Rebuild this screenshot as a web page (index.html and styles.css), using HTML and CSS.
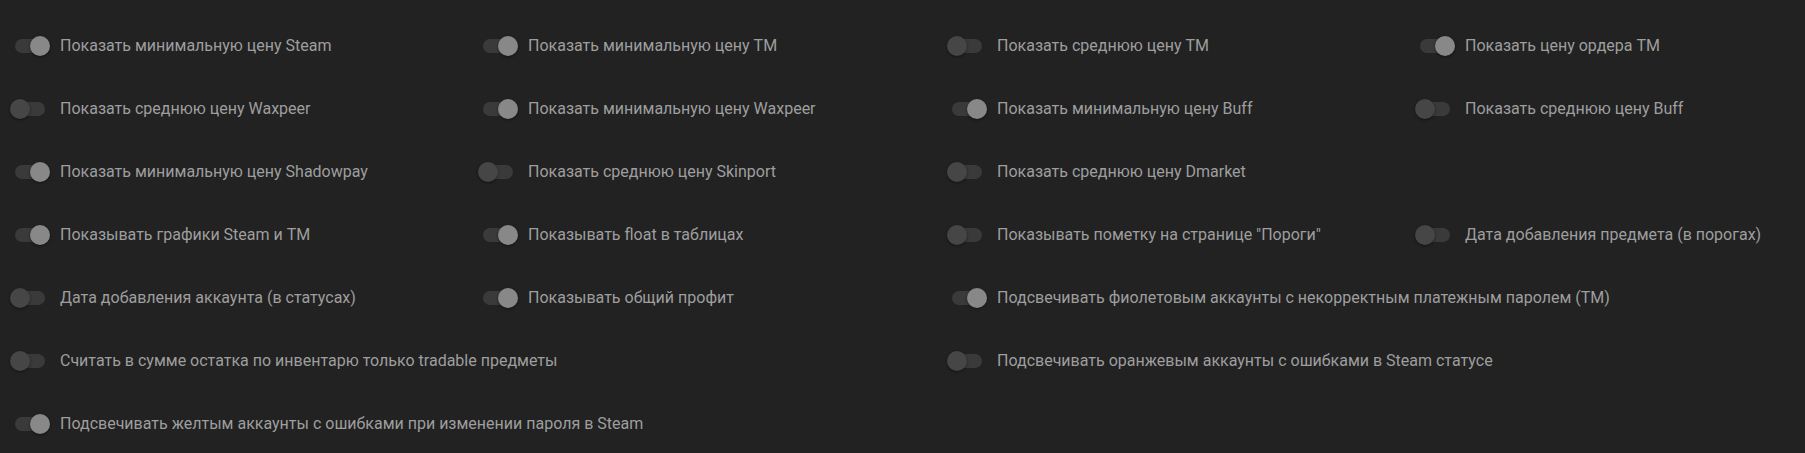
FILE: index.html
```html
<!doctype html>
<html>
    <head>
        <meta charset='utf-8'>
        <title>Настройки</title>
        <link rel="stylesheet" href="styles.css">
    </head>
    <body>
        <div class='settings'>
            <label class='opt'><input type='checkbox' checked><span class='switch'></span>Показать минимальную цену Steam</label>
            <label class='opt'><input type='checkbox' checked><span class='switch'></span>Показать минимальную цену TM</label>
            <label class='opt'><input type='checkbox'><span class='switch'></span>Показать среднюю цену TM</label>
            <label class='opt'><input type='checkbox' checked><span class='switch'></span>Показать цену ордера TM</label>

            <label class='opt'><input type='checkbox'><span class='switch'></span>Показать среднюю цену Waxpeer</label>
            <label class='opt'><input type='checkbox' checked><span class='switch'></span>Показать минимальную цену Waxpeer</label>
            <label class='opt'><input type='checkbox' checked><span class='switch'></span>Показать минимальную цену Buff</label>
            <label class='opt'><input type='checkbox'><span class='switch'></span>Показать среднюю цену Buff</label>

            <label class='opt'><input type='checkbox' checked><span class='switch'></span>Показать минимальную цену Shadowpay</label>
            <label class='opt'><input type='checkbox'><span class='switch'></span>Показать среднюю цену Skinport</label>
            <label class='opt'><input type='checkbox'><span class='switch'></span>Показать среднюю цену Dmarket</label>
            <div class='opt'></div>

            <label class='opt'><input type='checkbox' checked><span class='switch'></span>Показывать графики Steam и TM</label>
            <label class='opt'><input type='checkbox' checked><span class='switch'></span>Показывать float в таблицах</label>
            <label class='opt'><input type='checkbox'><span class='switch'></span>Показывать пометку на странице "Пороги"</label>
            <label class='opt'><input type='checkbox'><span class='switch'></span>Дата добавления предмета (в порогах)</label>

            <label class='opt'><input type='checkbox'><span class='switch'></span>Дата добавления аккаунта (в статусах)</label>
            <label class='opt'><input type='checkbox' checked><span class='switch'></span>Показывать общий профит</label>
            <label class='opt wide'><input type='checkbox' checked><span class='switch'></span>Подсвечивать фиолетовым аккаунты с некорректным платежным паролем (TM)</label>

            <label class='opt wide'><input type='checkbox'><span class='switch'></span>Считать в сумме остатка по инвентарю только tradable предметы</label>
            <label class='opt wide'><input type='checkbox'><span class='switch'></span>Подсвечивать оранжевым аккаунты с ошибками в Steam статусе</label>

            <label class='opt wide'><input type='checkbox' checked><span class='switch'></span>Подсвечивать желтым аккаунты с ошибками при изменении пароля в Steam</label>
        </div>
    </body>
</html>
```

FILE: styles.css
```css
html,body {
    margin:0;
    padding:0;
}
body {
    background:#222;
    overflow:hidden;
    font-family:Roboto,'Noto Sans',Arial,sans-serif;
    font-size:16px;
    color:#9e9e9e;
}
.settings {
    display:grid;
    grid-template-columns:468px 469px 468px 1fr;
    grid-auto-rows:63px;
    padding-top:14px;
}
.opt {
    display:flex;
    align-items:center;
    padding-left:10px;
    white-space:nowrap;
    cursor:pointer;
}
.opt.wide {
    grid-column:span 2;
}
.opt input {
    display:none;
}
.switch {
    position:relative;
    flex:none;
    width:40px;
    height:20px;
    margin-right:10px;
}
.switch:before {
    content:'';
    position:absolute;
    left:5px;
    top:3px;
    width:30px;
    height:14px;
    border-radius:7px;
    background:#3a3a3a;
}
.switch:after {
    content:'';
    position:absolute;
    left:0;
    top:0;
    width:20px;
    height:20px;
    border-radius:50%;
    background:#464646;
    box-shadow:0 1px 3px rgba(0,0,0,0.45);
    transition:left .2s;
}
.opt input:checked + .switch:after {
    left:20px;
    background:#888;
}
```
